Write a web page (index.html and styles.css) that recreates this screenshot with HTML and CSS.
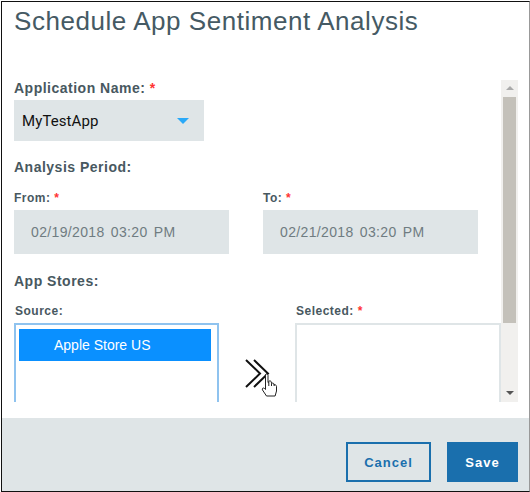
FILE: index.html
```html
<!DOCTYPE html>
<html lang="en">
<head>
  <meta charset="UTF-8" />
  <title>Schedule App Sentiment Analysis</title>
  <link rel="stylesheet" href="styles.css">
</head>
<body>

  <div class="dialog">
    <h1>Schedule App Sentiment Analysis</h1>

    <div class="scroll-area">
      <div class="form">
        <label class="label app-label">Application Name: <span class="req">*</span></label>
        <div class="select">
          <span>MyTestApp</span>
          <span class="caret"></span>
        </div>

        <div class="label period-label">Analysis Period:</div>
        <div class="dates">
          <div class="date-field">
            <label class="label small">From: <span class="req">*</span></label>
            <div class="date-input">02/19/2018 03:20 PM</div>
          </div>
          <div class="date-field">
            <label class="label small">To: <span class="req">*</span></label>
            <div class="date-input">02/21/2018 03:20 PM</div>
          </div>
        </div>

        <div class="label stores-label">App Stores:</div>
        <div class="stores">
          <div class="store-col source">
            <label class="label small">Source:</label>
            <div class="list active">
              <div class="list-item">Apple Store US</div>
            </div>
          </div>
          <div class="move">
            <svg width="26" height="30" viewBox="0 0 26 30" fill="none" stroke="#111" stroke-width="2">
              <path d="M1 1 L15 14.5 L1 28" />
              <path d="M9 1 L23 14.5 L9 28" />
            </svg>
            <!-- mouse pointer from the capture -->
            <svg class="hand" width="18" height="24" viewBox="0 0 18 24">
              <path d="M4.500 1.500c.8-.9 2.300-.6 2.500.8V9.500l.8.200V8.200c1-.6 2.300-.3 2.500.8l.2 1.400c1-.6 2.300-.3 2.500.7l.1.900c1.100-.5 2.400.1 2.400 1.300V18l-1.400 5H5.500L1.500 17c-.9-1.300.6-2.700 1.900-1.600L4.500 16.500Z" fill="#fff" stroke="#222" stroke-width="1" stroke-linejoin="round" />
              <path d="M7.800 9.700V13M10.500 10.400V13M13.100 11.300V13" fill="none" stroke="#222" stroke-width="1" />
            </svg>
          </div>
          <div class="store-col selected">
            <label class="label small">Selected: <span class="req">*</span></label>
            <div class="list"></div>
          </div>
        </div>
      </div>

      <div class="scrollbar">
        <span class="arrow up"></span>
        <div class="thumb"></div>
        <span class="arrow down"></span>
      </div>
    </div>

    <div class="footer">
      <button class="btn cancel">Cancel</button>
      <button class="btn save">Save</button>
    </div>
  </div>

</body>
</html>
```

FILE: styles.css
```css
:root {
  --panel: #dfe5e7;
  --text: #48585f;
  --blue: #1a6fad;
}

* {
  box-sizing: border-box;
}

body {
  margin: 0;
  padding: 1px 0 0 1px;
  background: #fff;
  font-family: "Liberation Sans", Arial, sans-serif;
  color: var(--text);
}

.dialog {
  width: 529px;
  height: 491px;
  border: 1px solid #111;
  border-right-color: #999;
  display: flex;
  flex-direction: column;
  overflow: hidden;
}

h1 {
  margin: 0;
  height: 78px;
  padding: 3px 0 0 12px;
  font-size: 26px;
  font-weight: normal;
  line-height: 32px;
  letter-spacing: 0.55px;
  color: #455a64;
}

.scroll-area {
  display: flex;
  height: 322px;
  padding-left: 12px;
}

.form {
  width: 487px;
  height: 322px;
  overflow: hidden;
}

.label {
  display: block;
  font-size: 14px;
  font-weight: bold;
  line-height: 16px;
  letter-spacing: 0.5px;
}

.label.small {
  font-size: 12px;
  letter-spacing: 0.5px;
}

.req {
  color: #f33;
}

.select {
  display: flex;
  align-items: center;
  justify-content: space-between;
  width: 190px;
  height: 41px;
  margin-top: 4px;
  padding: 0 15px 0 8px;
  background: var(--panel);
  font-family: Roboto, sans-serif;
  font-size: 15px;
  letter-spacing: 0.1px;
  color: #111;
}

.caret {
  width: 0;
  height: 0;
  border-left: 6px solid transparent;
  border-right: 6px solid transparent;
  border-top: 6px solid #2aa9f8;
}

.period-label {
  margin-top: 18px;
}

.dates {
  display: flex;
  gap: 34px;
  margin-top: 15px;
}

.date-field {
  width: 215px;
}

.date-input {
  height: 44px;
  margin-top: 4px;
  padding-left: 17px;
  background: var(--panel);
  font-size: 14px;
  line-height: 44px;
  letter-spacing: 0.35px;
  word-spacing: 2px;
  color: #6f7c81;
}

.stores-label {
  margin-top: 19px;
}

.stores {
  display: flex;
  margin-top: 14px;
}

.store-col.source {
  width: 205px;
}

.store-col.source .label {
  padding-left: 1px;
}

.store-col.selected {
  width: 206px;
}

.store-col.selected .label {
  padding-left: 1px;
}

.move {
  position: relative;
  width: 76px;
  padding: 56px 0 0 26px;
}

.hand {
  position: absolute;
  left: 42px;
  top: 70px;
}

.list {
  height: 110px;
  margin-top: 4px;
  padding: 4px 6px 0 3px;
  border: 2px solid var(--panel);
}

.list.active {
  border-color: #8fc3ef;
}

.list-item {
  height: 32px;
  padding-left: 35px;
  background: #0a90ff;
  color: #fff;
  font-size: 14px;
  line-height: 32px;
}

.scrollbar {
  display: flex;
  flex-direction: column;
  align-items: center;
  width: 17px;
  background: #f1f0ee;
}

.thumb {
  width: 13px;
  height: 226px;
  background: #c4c1ba;
}

.arrow {
  width: 0;
  height: 0;
  border-left: 4px solid transparent;
  border-right: 4px solid transparent;
}

.arrow.up {
  margin: 6px 0 7px;
  border-bottom: 4px solid #aaa;
}

.arrow.down {
  margin-top: 68px;
  border-top: 4px solid #555;
}

.footer {
  display: flex;
  justify-content: flex-end;
  gap: 16px;
  height: 73px;
  margin-top: 16px;
  padding: 24px 11px 0 0;
  background: var(--panel);
}

.btn {
  height: 40px;
  font-family: "Liberation Sans", Arial, sans-serif;
  font-size: 13px;
  font-weight: bold;
  letter-spacing: 1px;
}

.cancel {
  width: 85px;
  border: 2px solid var(--blue);
  background: transparent;
  color: var(--blue);
}

.save {
  width: 71px;
  border: none;
  background: var(--blue);
  color: #fff;
}
```
